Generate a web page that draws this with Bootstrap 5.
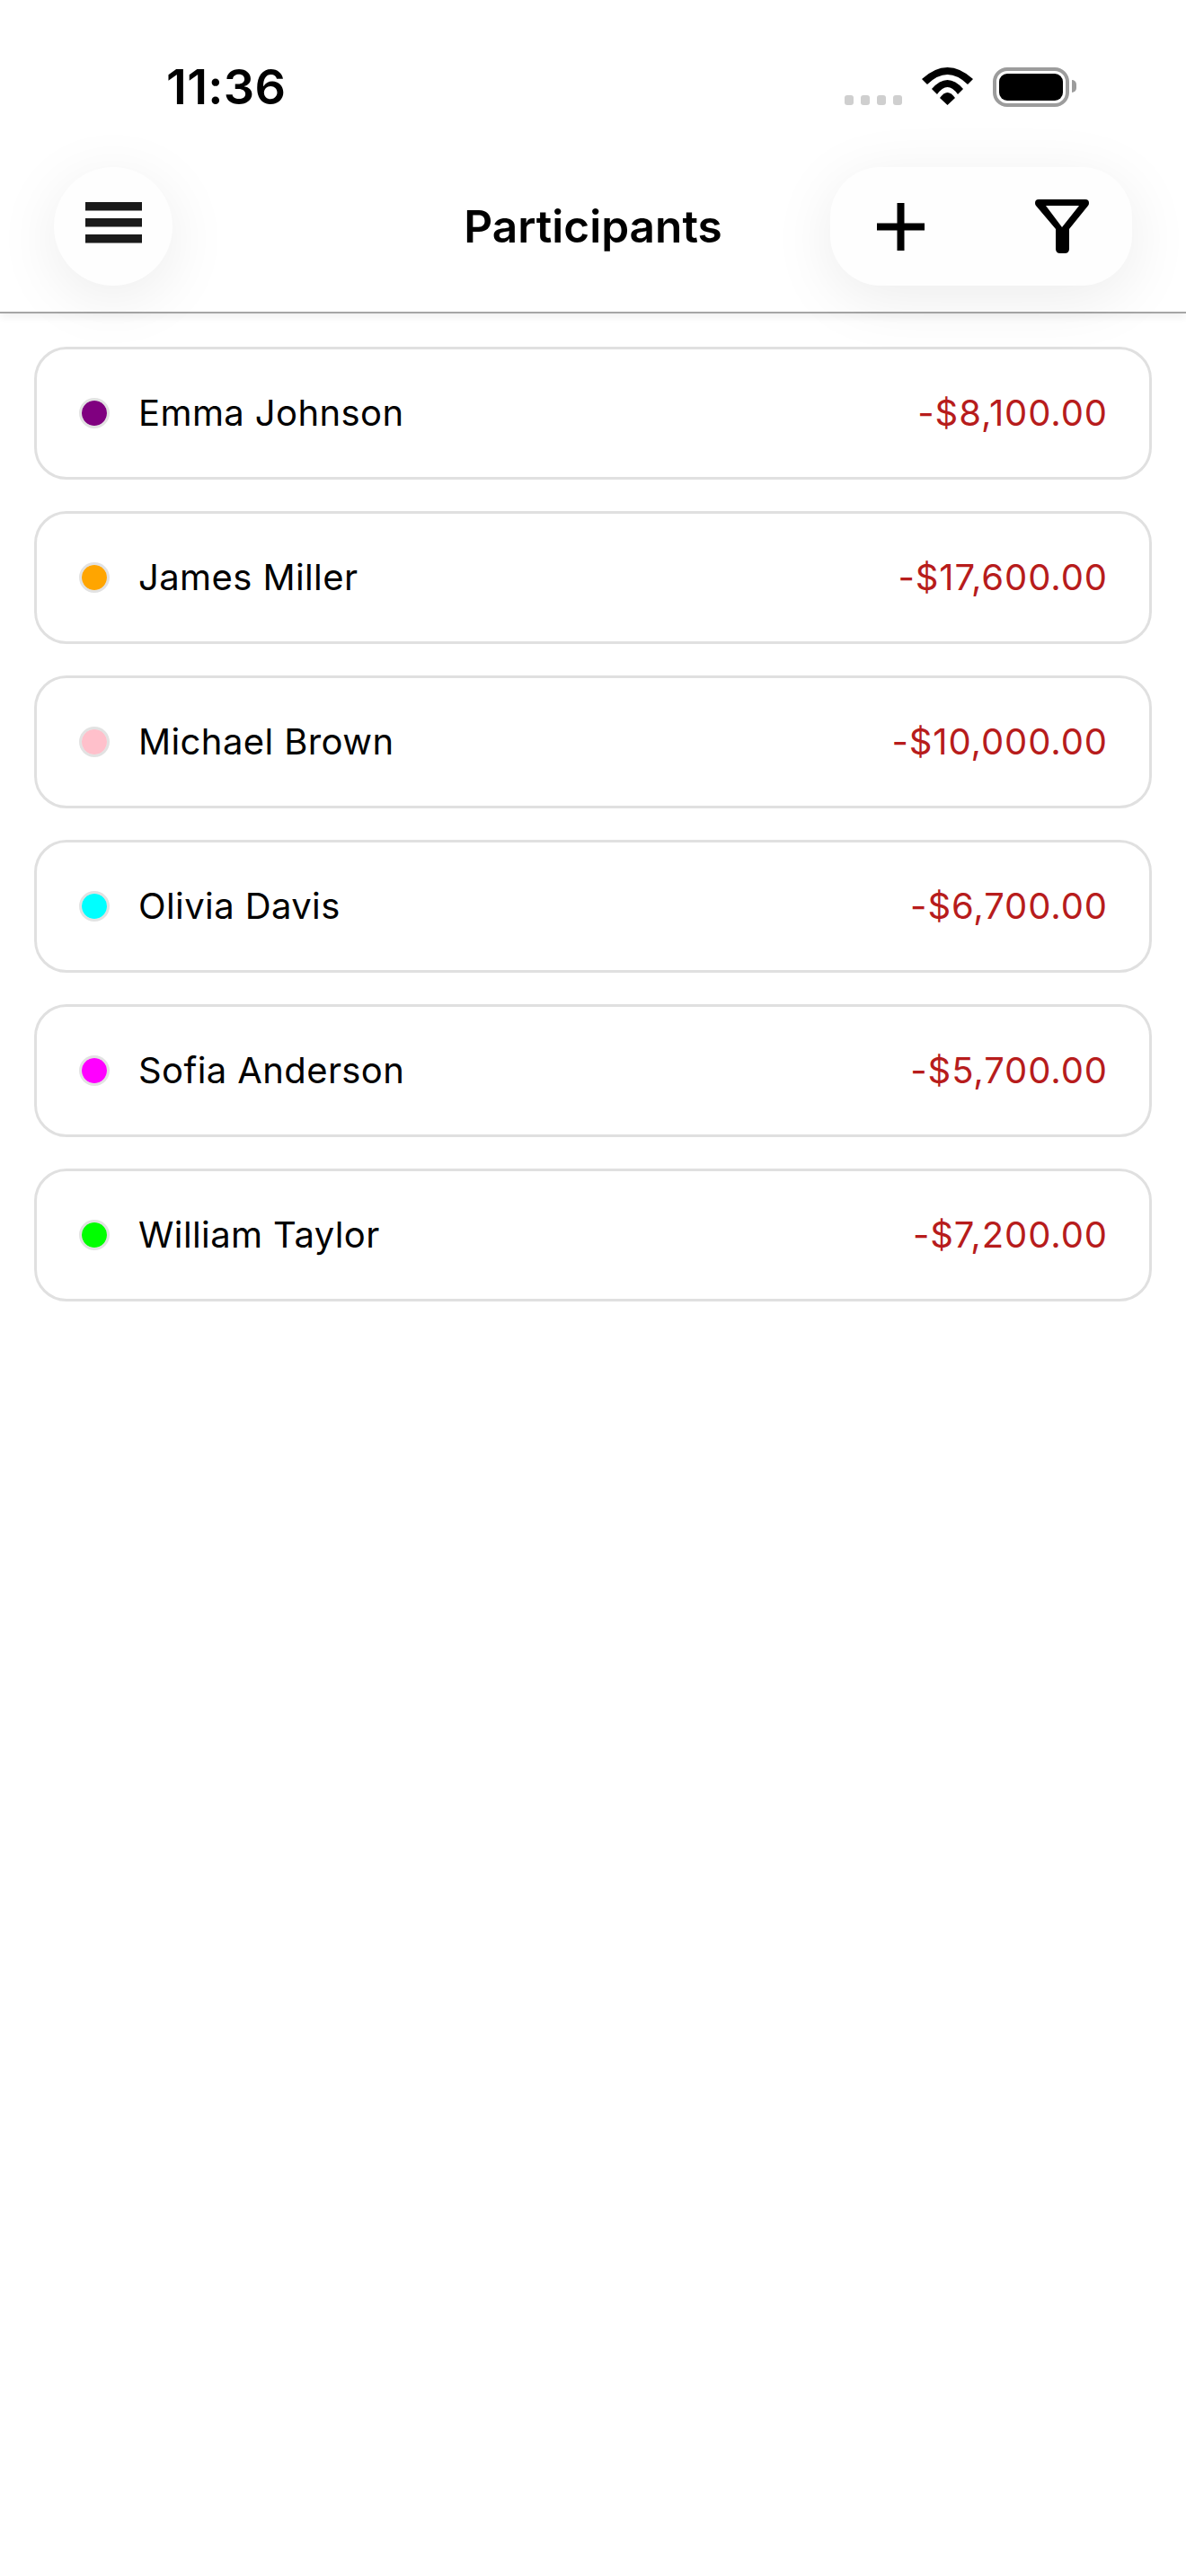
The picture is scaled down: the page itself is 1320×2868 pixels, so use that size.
<!DOCTYPE html>
<html lang="en">
<head>
    <meta charset="UTF-8">
    <meta name="viewport" content="width=device-width, initial-scale=1.0">
    <title>Participants</title>
    <link href="https://cdn.jsdelivr.net/npm/bootstrap@5.3.0/dist/css/bootstrap.min.css" rel="stylesheet">
    <style>
        body { font-family: Inter, "Liberation Sans", sans-serif; background: #fff; color: #000; }
        .top-area { position: relative; z-index: 2; height: 349px; background: #fff; border-bottom: 2px solid #a6a6a6; box-shadow: 0 3px 10px rgba(0,0,0,.07); }
        .status-row { height: 186px; padding: 75px 122px 0 185px; }
        .clock { font-size: 54px; line-height: 43px; font-weight: 600; letter-spacing: .3px; }
        .signal-dots { gap: 8px; margin: 31px 22px 0 0; }
        .signal-dots span { width: 10px; height: 11px; border-radius: 3px; background: #cfcfcf; }
        .battery-box { width: 85px; height: 44px; margin-left: 22px; padding: 3px; border: 4px solid #9c9c9c; border-radius: 16px; }
        .battery-box span { border-radius: 9px; background: #000; }
        .battery-tip { width: 5px; height: 14px; margin: 14px 0 0 3px; border-radius: 0 7px 7px 0; background: #9c9c9c; }
        .nav-row { display: grid; grid-template-columns: 1fr auto 1fr; padding: 0 60px; }
        .float-btn { height: 132px; background: #fefefe; box-shadow: 0 14px 70px rgba(0,0,0,.08); }
        .menu-btn { width: 132px; }
        .action-pill { width: 336px; border-radius: 56px; padding-left: 52px; padding-right: 48px; }
        .menu-bars { width: 63px; gap: 8px; margin-bottom: 8px; }
        .menu-bars span { height: 10px; background: #1a1a1a; border-bottom: 1px solid #8a8a8a; }
        .page-title { font-size: 49.6px; font-weight: 600; }
        .people-list { padding: 37px 38px 0; gap: 35px; }
        .person-row { height: 148px; padding: 0 46px 0 47px; border: 3px solid #e0e0e0; border-radius: 36px; font-size: 40px; letter-spacing: .4px; }
        .person-dot { width: 34px; height: 34px; margin-right: 32px; border: 3px solid rgba(190,190,190,.45); }
        .person-money { color: #b71c1c; letter-spacing: .9px; }
    </style>
</head>
<body>
    <div class="top-area">
        <div class="status-row d-flex justify-content-between align-items-start">
            <div class="clock">11:36</div>
            <div class="d-flex align-items-start">
                <div class="signal-dots d-flex"><span></span><span></span><span></span><span></span></div>
                <svg width="57" height="42" viewBox="0 0 57 42">
                    <path d="M0 13Q28.500-13 57 13L51 19Q28.500-3 6 19Z" fill="#000"/>
                    <path d="M11 24Q28.500 4 46 24L40 30Q28.500 14 17 30Z" fill="#000"/>
                    <path d="M20 34Q28.500 22 37 34L28.500 42Z" fill="#000"/>
                </svg>
                <div class="battery-box d-flex"><span class="flex-fill"></span></div>
                <div class="battery-tip"></div>
            </div>
        </div>
        <div class="nav-row align-items-center">
            <div>
                <button class="float-btn menu-btn btn rounded-circle border-0 p-0 d-flex align-items-center justify-content-center" type="button" aria-label="Menu">
                    <div class="menu-bars d-flex flex-column"><span></span><span></span><span></span></div>
                </button>
            </div>
            <div class="page-title">Participants</div>
            <div class="d-flex justify-content-end">
                <div class="float-btn action-pill d-flex align-items-center justify-content-between">
                    <svg width="53" height="53" viewBox="0 0 53 53"><path d="M22.500 0H30.500V22.500H53V30.500H30.500V53H22.500V30.500H0V22.500H22.500Z" fill="#000"/></svg>
                    <svg width="60" height="60" viewBox="0 0 60 60"><path fill-rule="evenodd" fill="#000" d="M4 0H56Q60 0 60 4Q60 6 59 7L38 33V55Q38 60 33 60H28Q23 60 23 55V33L1 7Q0 6 0 4Q0 0 4 0ZM12 7H49L30 31Z"/></svg>
                </div>
            </div>
        </div>
    </div>

    <div id="people" class="people-list d-flex flex-column"></div>

    <script>
        const participants = [
            { name: "Emma Johnson", amount: "-$8,100.00", color: "#800080" },
            { name: "James Miller", amount: "-$17,600.00", color: "#ffa500" },
            { name: "Michael Brown", amount: "-$10,000.00", color: "#ffc0cb" },
            { name: "Olivia Davis", amount: "-$6,700.00", color: "#00ffff" },
            { name: "Sofia Anderson", amount: "-$5,700.00", color: "#ff00ff" },
            { name: "William Taylor", amount: "-$7,200.00", color: "#00ff00" }
        ];

        const peopleDiv = document.getElementById("people");
        participants.forEach(person => {
            const row = document.createElement("div");
            row.className = "person-row d-flex align-items-center";
            row.innerHTML = `
                <span class="person-dot rounded-circle" style="background-color: ${person.color}; background-clip: padding-box"></span>
                <span class="flex-fill">${person.name}</span>
                <span class="person-money">${person.amount}</span>
            `;
            peopleDiv.appendChild(row);
        });
    </script>
    <script src="https://cdn.jsdelivr.net/npm/bootstrap@5.3.0/dist/js/bootstrap.bundle.min.js"></script>
</body>
</html>
